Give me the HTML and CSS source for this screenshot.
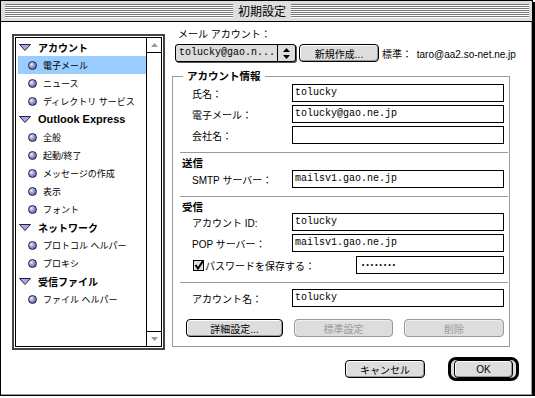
FILE: index.html
```html
<!DOCTYPE html>
<html lang="ja">
<head>
  <meta charset="UTF-8">
  <title>初期設定</title>
  <link rel="stylesheet" href="styles.css">
</head>
<body>
  <div class="window">
    <div class="titlebar">
      <div class="stripes left"></div>
      <div class="title">初期設定</div>
      <div class="stripes"></div>
    </div>

    <div class="content">
      <div class="main">
        <div class="listbox">
          <div class="listbox-inner">
            <div class="list">
              <div class="row head"><svg class="tri" viewBox="0 0 12 7"><polygon points="0.5,0.5 11.5,0.5 6,6.5"/></svg>アカウント</div>
              <div class="row selected"><span class="ball"></span>電子メール</div>
              <div class="row"><span class="ball"></span>ニュース</div>
              <div class="row"><span class="ball"></span>ディレクトリ サービス</div>
              <div class="row head latin"><svg class="tri" viewBox="0 0 12 7"><polygon points="0.5,0.5 11.5,0.5 6,6.5"/></svg>Outlook Express</div>
              <div class="row"><span class="ball"></span>全般</div>
              <div class="row"><span class="ball"></span>起動/終了</div>
              <div class="row"><span class="ball"></span>メッセージの作成</div>
              <div class="row"><span class="ball"></span>表示</div>
              <div class="row"><span class="ball"></span>フォント</div>
              <div class="row head"><svg class="tri" viewBox="0 0 12 7"><polygon points="0.5,0.5 11.5,0.5 6,6.5"/></svg>ネットワーク</div>
              <div class="row"><span class="ball"></span>プロトコル ヘルパー</div>
              <div class="row"><span class="ball"></span>プロキシ</div>
              <div class="row head"><svg class="tri" viewBox="0 0 12 7"><polygon points="0.5,0.5 11.5,0.5 6,6.5"/></svg>受信ファイル</div>
              <div class="row"><span class="ball"></span>ファイル ヘルパー</div>
            </div>
            <div class="scrollbar">
              <div class="arrow up"><svg viewBox="0 0 7 4"><polygon points="3.5,0 7,4 0,4"/></svg></div>
              <div class="arrow down"><svg viewBox="0 0 7 4"><polygon points="0,0 7,0 3.5,4"/></svg></div>
            </div>
          </div>
        </div>

        <div class="pane">
          <div class="pane-label">メール アカウント：</div>
          <div class="account-row">
            <div class="popup">
              <span class="popup-text">tolucky@gao.n...</span>
              <span class="popup-arrows"><svg viewBox="0 0 7 11"><polygon points="3.5,0 7,4 0,4"/><polygon points="0,7 7,7 3.5,11"/></svg></span>
            </div>
            <button class="btn new">新規作成...</button>
            <span class="std">標準： <span class="addr">taro@aa2.so-net.ne.jp</span></span>
          </div>

          <div class="group">
            <div class="group-title">アカウント情報</div>
            <div class="fields first">
              <div class="field-row"><span class="label">氏名：</span><span class="field">tolucky</span></div>
              <div class="field-row"><span class="label">電子メール：</span><span class="field">tolucky@gao.ne.jp</span></div>
              <div class="field-row"><span class="label">会社名：</span><span class="field"></span></div>
            </div>
            <div class="sep"></div>
            <div class="section-title">送信</div>
            <div class="fields smtp">
              <div class="field-row"><span class="label">SMTP サーバー：</span><span class="field">mailsv1.gao.ne.jp</span></div>
            </div>
            <div class="sep"></div>
            <div class="section-title">受信</div>
            <div class="fields">
              <div class="field-row"><span class="label">アカウント ID:</span><span class="field">tolucky</span></div>
              <div class="field-row"><span class="label">POP サーバー：</span><span class="field">mailsv1.gao.ne.jp</span></div>
              <div class="field-row pw-row">
                <svg class="check" viewBox="0 0 11 11"><rect x="0.5" y="0.5" width="10" height="10"/><polyline points="2.5,5 5,8.5 10,1"/></svg>
                <span class="pw-label">パスワードを保存する：</span>
                <span class="field pw">••••••••</span>
              </div>
            </div>
            <div class="sep"></div>
            <div class="fields name">
              <div class="field-row"><span class="label">アカウント名：</span><span class="field">tolucky</span></div>
            </div>
            <div class="group-buttons">
              <button class="btn detail">詳細設定...</button>
              <button class="btn std-set" disabled>標準設定</button>
              <button class="btn remove" disabled>削除</button>
            </div>
          </div>
        </div>
      </div>

      <div class="footer">
        <button class="btn cancel">キャンセル</button>
        <div class="ring"><button class="btn ok">OK</button></div>
      </div>
    </div>
  </div>
</body>
</html>
```

FILE: styles.css
```css
* {
  box-sizing: border-box;
}
body {
  margin: 0;
  background: #fff;
  color: #000;
  font-family: "Liberation Sans", "Noto Sans CJK JP", sans-serif;
  font-size: 10px;
}
.window {
  width: 533px;
  height: 396px;
  border: 1px solid #000;
  box-shadow: 2px 2px 0 #000;
  display: flex;
  flex-direction: column;
  background: #fff;
}

/* title bar */
.titlebar {
  flex: none;
  height: 21px;
  display: flex;
  padding: 3px 3px 0 4px;
  background: #ddd;
  border-bottom: 1px solid #000;
}
.stripes {
  flex: 1;
  height: 14px;
  background: repeating-linear-gradient(to bottom, #777 0 1px, #fff 1px 2px);
}
.stripes.left {
  flex: none;
  width: 228px;
}
.title {
  width: 58px;
  text-align: center;
  font-family: "Noto Sans CJK JP", sans-serif;
  font-size: 12px;
  line-height: 14px;
}

.content {
  flex: 1;
  display: flex;
  flex-direction: column;
  border-right: 1px solid #999;
  border-bottom: 1px solid #999;
}
.main {
  display: flex;
}

/* category list */
.listbox {
  width: 153px;
  height: 316px;
  margin: 12px 0 0 11px;
  border: 2px solid #444;
  padding: 1px;
}
.listbox-inner {
  height: 100%;
  display: flex;
  border: 1px solid #000;
}
.list {
  flex: 1;
  padding-left: 2px;
}
.row {
  height: 18px;
  display: flex;
  align-items: center;
  font-size: 9px;
  white-space: nowrap;
}
.row.head {
  font-size: 10px;
  font-weight: bold;
}
.row.latin {
  font-size: 11px;
}
.row.selected {
  background: #9cf;
}
.tri {
  width: 12px;
  height: 7px;
  margin: 0 7px 0 1px;
  fill: #a6a6e6;
  stroke: #222244;
  stroke-width: 1;
}
.ball {
  width: 9px;
  height: 9px;
  margin: 0 6px 0 10px;
  border-radius: 50%;
  border: 1px solid #223;
  background: radial-gradient(circle at 35% 35%, #f0f0ff 0, #9a9ae0 40%, #44447a 100%);
}
.scrollbar {
  width: 15px;
  display: flex;
  flex-direction: column;
  justify-content: space-between;
  border-left: 1px solid #000;
}
.arrow {
  height: 15px;
  display: flex;
  align-items: center;
  justify-content: center;
}
.arrow svg {
  width: 7px;
  height: 4px;
  fill: #999;
}
.arrow.up {
  border-bottom: 1px solid #000;
}
.arrow.down {
  border-top: 1px solid #000;
}

/* right pane */
.pane {
  width: 350px;
  margin-left: 7px;
}
.pane-label {
  margin-top: 7px;
  padding-left: 6px;
  line-height: 12px;
}
.account-row {
  display: flex;
  align-items: center;
  height: 18px;
  margin-top: 3px;
  white-space: nowrap;
}
.popup {
  width: 121px;
  height: 18px;
  margin-left: 3px;
  display: flex;
  border: 1px solid #000;
  border-radius: 3px;
  background: #ddd;
  box-shadow: 1px 1px 0 #555;
}
.popup-text {
  flex: 1;
  padding-left: 3px;
  font-family: "Liberation Mono", monospace;
  line-height: 16px;
}
.popup-arrows {
  width: 18px;
  display: flex;
  align-items: center;
  justify-content: center;
  border-left: 1px solid #000;
}
.popup-arrows svg {
  width: 7px;
  height: 11px;
}
.btn {
  height: 18px;
  padding: 0;
  font: inherit;
  color: #000;
  background: #ddd;
  border: 1px solid #000;
  border-radius: 4px;
  box-shadow: inset 1px 1px #fff, inset -1px -1px #999;
}
.btn:disabled {
  color: #999;
  border-color: #999;
  box-shadow: inset 1px 1px #eee;
}
.btn.new {
  width: 80px;
  margin-left: 3px;
}
.std {
  margin-left: 3px;
}
.addr {
  margin-left: 2px;
}

/* account group */
.group {
  width: 338px;
  margin-top: 14px;
  padding-bottom: 9px;
  border: 1px solid #999;
}
.group-title {
  width: fit-content;
  margin: -7px 0 0 10px;
  padding: 0 4px;
  background: #fff;
  font-size: 10.5px;
  font-weight: bold;
  line-height: 12px;
}
.fields {
  display: flex;
  flex-direction: column;
  gap: 3px;
}
.fields.first {
  margin-top: 2px;
}
.fields.smtp {
  margin-top: 1px;
}
.fields.name {
  margin-top: 6px;
}
.field-row {
  height: 18px;
  display: flex;
  align-items: center;
  padding-left: 19px;
  white-space: nowrap;
}
.label {
  width: 100px;
}
.field {
  width: 212px;
  height: 18px;
  padding-left: 2px;
  border: 1px solid #000;
  background: #fff;
  font-family: "Liberation Mono", monospace;
  line-height: 16px;
}
.pw-row {
  margin-top: 1px;
}
.check {
  width: 11px;
  height: 11px;
  margin-left: 1px;
  fill: #ddd;
  stroke: #000;
}
.check polyline {
  fill: none;
  stroke-width: 2;
}
.pw-label {
  width: 151px;
  margin-left: 1px;
}
.field.pw {
  width: 148px;
  padding-left: 4px;
  font-size: 7px;
  letter-spacing: 0.2px;
}
.sep {
  height: 1px;
  margin: 8px 1px 0 7px;
  background: #999;
}
.section-title {
  margin-top: 4px;
  padding-left: 9px;
  font-size: 10.5px;
  font-weight: bold;
  line-height: 12px;
}
.group-buttons {
  display: flex;
  gap: 11px;
  margin-top: 12px;
  padding-left: 13px;
}
.btn.detail {
  width: 97px;
}
.btn.std-set {
  width: 99px;
}
.btn.remove {
  width: 100px;
}

/* dialog buttons */
.footer {
  display: flex;
  align-items: center;
  justify-content: flex-end;
  gap: 23px;
  height: 24px;
  margin-top: 7px;
  padding-right: 12px;
}
.btn.cancel {
  width: 80px;
}
.ring {
  width: 71px;
  height: 24px;
  padding: 0 3px;
  border: 3px solid #000;
  border-radius: 8px;
  background: #ddd;
}
.btn.ok {
  width: 100%;
}
```
